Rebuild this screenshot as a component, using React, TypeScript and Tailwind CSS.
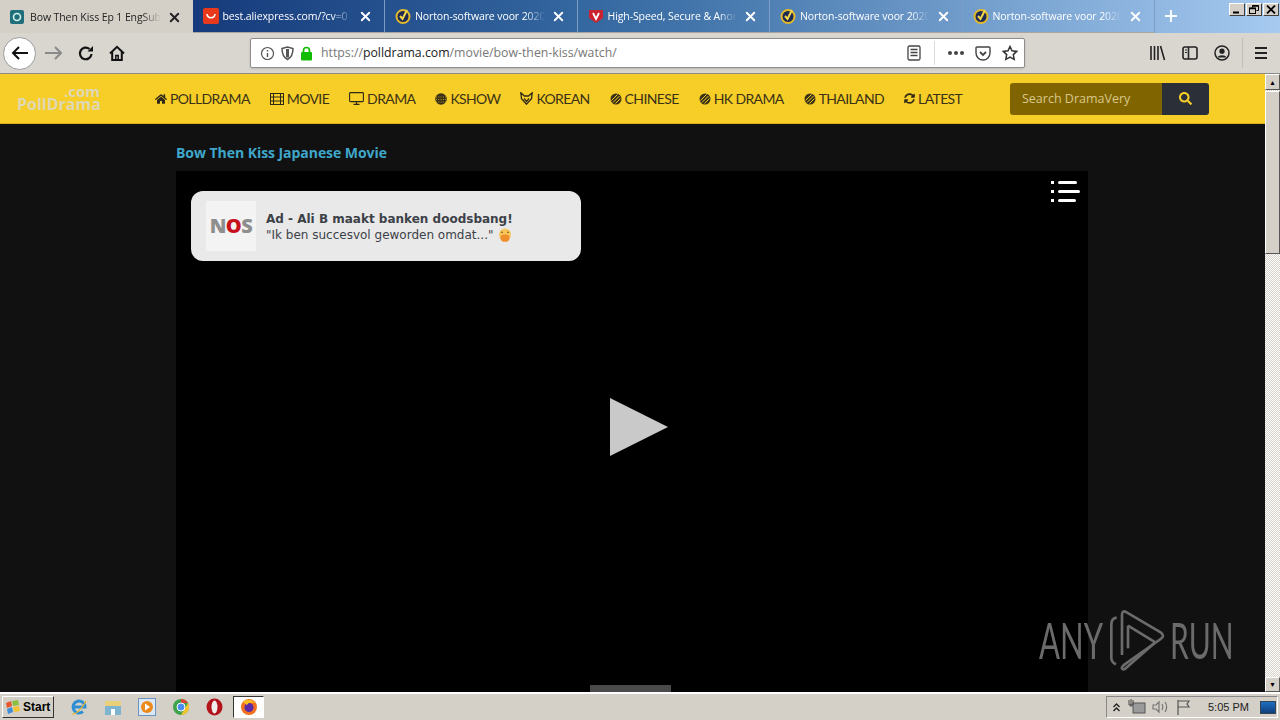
import { ReactNode } from "react";
import { FaHome, FaSearch, FaSyncAlt } from "react-icons/fa";
import { FiX, FiPlus } from "react-icons/fi";

const tabs = [
  { title: "Bow Then Kiss Ep 1 EngSub", icon: "poll", active: true },
  { title: "best.aliexpress.com/?cv=0", icon: "ali" },
  { title: "Norton-software voor 2020", icon: "norton" },
  { title: "High-Speed, Secure & Anonym", icon: "vpn" },
  { title: "Norton-software voor 2020", icon: "norton" },
  { title: "Norton-software voor 2020", icon: "norton" },
];

function TabIcon({ kind }: { kind: string }) {
  if (kind === "poll")
    return (
      <svg width="14" height="14" viewBox="0 0 14 14">
        <rect width="14" height="14" rx="2" fill="#1f6f7a" />
        <circle cx="7" cy="7" r="3.5" fill="none" stroke="#d9f0f0" strokeWidth="1.6" />
      </svg>
    );
  if (kind === "ali")
    return (
      <svg width="16" height="16" viewBox="0 0 16 16">
        <rect width="16" height="16" rx="2" fill="#e8391c" />
        <path d="M4 6c.5 5 7.5 5 8 0" fill="none" stroke="#fff" strokeWidth="1.6" />
      </svg>
    );
  if (kind === "vpn")
    return (
      <svg width="16" height="16" viewBox="0 0 16 16">
        <path d="M1 2h14v8l-7 5-7-5z" fill="#c9232f" />
        <path d="M5 5l3 6 3-6" fill="none" stroke="#fff" strokeWidth="1.8" />
      </svg>
    );
  return (
    <svg width="16" height="16" viewBox="0 0 16 16">
      <circle cx="8" cy="8.5" r="6.5" fill="#1d2a55" stroke="#e3b92c" strokeWidth="2" />
      <path d="M5 8l2.5 3L12 2" fill="none" stroke="#f5d94a" strokeWidth="2" />
    </svg>
  );
}

function NavItem({ icon, label }: { icon: ReactNode; label: string }) {
  return (
    <a className="flex items-center gap-[3px] font-['Lato',sans-serif] text-[14px] tracking-[-0.620px] text-[#3a3218]">
      <span className="flex items-center justify-center text-[#2f2a18]">{icon}</span>
      {label}
    </a>
  );
}

function Stripes() {
  return (
    <svg width="12" height="12" viewBox="0 0 12 12" className="shrink-0">
      <circle cx="6" cy="6" r="5.500" fill="#3a3218" />
      <path d="M1.500 7.500l6-6M3 9.500l6.500-6.500M5.500 10.500l5-5" stroke="#f7cd27" strokeWidth="1" />
    </svg>
  );
}

function Dotted() {
  return (
    <svg width="12" height="12" viewBox="0 0 12 12" className="shrink-0">
      <circle cx="6" cy="6" r="5.800" fill="#3a3218" />
      <path d="M1 4h10M1 6.500h10M1 9h10" stroke="#f7cd27" strokeWidth="0.700" strokeDasharray="1 1.300" />
    </svg>
  );
}

function ToolbarIcons() {
  return (
    <div className="ml-auto flex items-center">
      <svg width="17" height="16" viewBox="0 0 17 16" className="mr-[16px]" fill="none" stroke="#222" strokeWidth="1.6">
        <path d="M2 1v14M5.500 1v14M9 1v14M11.500 1l4 14" />
      </svg>
      <svg width="16" height="14" viewBox="0 0 16 14" className="mr-[16px]" fill="none" stroke="#222" strokeWidth="1.6">
        <rect x="1" y="1" width="14" height="12" rx="2" />
        <path d="M6.500 1v12" />
        <path d="M3 4h2M3 6.500h2" strokeWidth="1" />
      </svg>
      <svg width="16" height="16" viewBox="0 0 16 16" className="mr-[12px]">
        <circle cx="8" cy="8" r="7" fill="none" stroke="#222" strokeWidth="1.500" />
        <circle cx="8" cy="6.200" r="2.600" fill="#222" />
        <path d="M3.500 12.500c1-3 8-3 9 0" fill="#222" />
      </svg>
      <div className="mr-[11px] h-[30px] w-px bg-[#c2bfb8]" />
      <svg width="14" height="12" viewBox="0 0 14 12" className="mr-[12px]" stroke="#222" strokeWidth="2">
        <path d="M1 1h12M1 6h12M1 11h12" />
      </svg>
    </div>
  );
}

function UrlBar() {
  return (
    <div className="ml-[125px] flex h-[30px] w-[775px] items-center rounded-[2px] border border-[#8d8d8d] bg-white pl-[9px] shadow-sm">
      <svg width="15" height="15" viewBox="0 0 15 15" fill="none" stroke="#555" strokeWidth="1.200">
        <circle cx="7.500" cy="7.500" r="6" />
        <path d="M7.500 7v4M7.500 4v1.400" strokeWidth="1.400" />
      </svg>
      <svg width="13" height="15" viewBox="0 0 13 15" className="ml-[6px]" fill="none" stroke="#555" strokeWidth="1.500">
        <path d="M1 2.500l5.500-1.500 5.500 1.500c0 6-1.500 9-5.500 11-4-2-5.500-5-5.500-11z" />
        <path d="M6.500 3v8.500" strokeWidth="3" />
      </svg>
      <svg width="13" height="15" viewBox="0 0 13 15" className="ml-[6px]">
        <rect x="1" y="6" width="11" height="8.500" rx="1" fill="#12bc00" />
        <path d="M3.500 6.500V4.500a3 3 0 0 1 6 0v2" fill="none" stroke="#12bc00" strokeWidth="1.700" />
      </svg>
      <span className="ml-[8px] mt-[1px] font-['Open_Sans',sans-serif] text-[12.300px] text-[#777]">
        https://<span className="text-[#222]">polldrama.com</span>/movie/bow-then-kiss/watch/
      </span>
      <div className="ml-auto flex items-center">
        <svg width="14" height="16" viewBox="0 0 14 16" fill="none" stroke="#444" strokeWidth="1.300">
          <rect x="1" y="1" width="12" height="14" rx="1.500" />
          <path d="M3.500 4.500h7M3.500 7.500h7M3.500 10.500h7" />
        </svg>
        <div className="mx-[13px] h-[24px] w-px bg-[#dcdcdc]" />
        <span className="flex gap-[2px]">
          <i className="h-[4px] w-[4px] rounded-full bg-[#444]" />
          <i className="h-[4px] w-[4px] rounded-full bg-[#444]" />
          <i className="h-[4px] w-[4px] rounded-full bg-[#444]" />
        </span>
        <svg width="16" height="15" viewBox="0 0 16 15" className="ml-[11px]" fill="none" stroke="#444" strokeWidth="1.400">
          <path d="M2 1h12a1 1 0 0 1 1 1v5a7 7 0 0 1-14 0V2a1 1 0 0 1 1-1z" />
          <path d="M5 6l3 3 3-3" strokeWidth="1.800" />
        </svg>
        <svg width="16" height="16" viewBox="0 0 16 16" className="ml-[11px] mr-[6px]" fill="none" stroke="#333" strokeWidth="1.500">
          <path d="M8 1.500l2 4.300 4.700.6-3.400 3.200.9 4.700L8 12l-4.200 2.300.9-4.700L1.300 6.400 6 5.800z" />
        </svg>
      </div>
    </div>
  );
}

function WindowButton({ children }: { children: ReactNode }) {
  return (
    <span className="flex h-[13px] w-[16px] items-center justify-center border border-t-white border-l-white border-r-[#404040] border-b-[#404040] bg-[#d4d0c8]">
      <svg width="10" height="9" viewBox="0 0 10 9" fill="none" stroke="#000">
        {children}
      </svg>
    </span>
  );
}

function Browser() {
  return (
    <>
      <div className="flex h-[33px] shrink-0 bg-linear-to-r from-[#0a246a] via-[#3a6ea5] to-[#a6caf0]">
        {tabs.map((t, i) => (
          <div
            key={i}
            className={
              t.active
                ? "flex h-[33px] w-[192.500px] shrink-0 items-center bg-[#d4d0c8] pl-[10px] pr-[11px] text-[#222]"
                : "flex h-[33px] w-[192.500px] shrink-0 items-center border-r border-[#7f9cc4] border-b border-b-[#a9a69f] pl-[10px] pr-[11px] text-white"
            }
          >
            <span className="flex w-[20px] shrink-0"><TabIcon kind={t.icon} /></span>
            <span className="mt-[2px] flex-1 overflow-hidden whitespace-nowrap font-['Open_Sans',sans-serif] text-[10.500px] tracking-[-0.100px] [mask-image:linear-gradient(to_right,black_85%,transparent)]">
              {t.title}
            </span>
            <FiX size={15} strokeWidth={3} className="ml-[6px] mt-[1px] shrink-0" />
          </div>
        ))}
        <FiPlus size={18} strokeWidth={2.500} className="ml-[7px] mt-[7px] text-white" />
        <div className="ml-auto mr-[1px] mt-[3px] flex h-[13px] gap-[1px]">
          <WindowButton>
            <path d="M1 7.500h6" strokeWidth="2" />
          </WindowButton>
          <WindowButton>
            <path d="M3.500 2.500V.500h6v5H7.500" strokeWidth="1" />
            <rect x="0.500" y="3" width="6" height="5.500" strokeWidth="1" />
            <path d="M0.500 3.500h6M3.500 1h6" strokeWidth="1.500" />
          </WindowButton>
          <WindowButton>
            <path d="M1 .5l8 8M9 .5l-8 8" strokeWidth="1.800" />
          </WindowButton>
        </div>
      </div>
      <div className="flex h-[41px] shrink-0 items-center border-b border-[#8c8a85] bg-[#d9d6d0]">
        <div className="ml-[3px] flex h-[33px] w-[33px] items-center justify-center rounded-full border border-[#9a9a9a] bg-white">
          <svg width="18" height="16" viewBox="0 0 18 16" fill="none" stroke="#111" strokeWidth="2">
            <path d="M17 8H2M8 2L2 8l6 6" />
          </svg>
        </div>
        <svg width="17" height="14" viewBox="0 0 17 14" className="ml-[9px]" fill="none" stroke="#8a8a8a" strokeWidth="2">
          <path d="M0 7h15M10 1l6 6-6 6" />
        </svg>
        <svg width="16" height="16" viewBox="0 0 16 16" className="ml-[16px]" fill="none" stroke="#111" strokeWidth="2.200">
          <path d="M13.500 9a5.800 5.800 0 1 1-2-5" />
          <path d="M15 1v5.500H9.500z" fill="#111" stroke="none" />
        </svg>
        <svg width="16" height="16" viewBox="0 0 16 16" className="ml-[15px]" fill="none" stroke="#111" strokeWidth="2">
          <path d="M1 8.500L8 1.800l7 6.700" />
          <path d="M3.200 7v8h9.600V7" />
          <path d="M6.800 15v-4.500h2.400V15" strokeWidth="1.500" />
        </svg>
        <UrlBar />
        <ToolbarIcons />
      </div>
    </>
  );
}

function SiteHeader() {
  return (
    <header className="flex h-[50px] shrink-0 items-center border-b border-[#d9b21f] bg-[#f7cd27]">
      <div className="ml-[17px] flex w-[138px] flex-col font-['Open_Sans',sans-serif] font-bold leading-none text-[#dfd8b4]">
        <span className="w-[83px] text-right text-[15px] leading-[10px]">.com</span>
        <span className="text-[16px] leading-[16px]">PollDrama</span>
      </div>
      <nav className="flex gap-[20px]">
        <NavItem icon={<FaHome size={12} />} label="POLLDRAMA" />
        <NavItem
          icon={
            <svg width="14" height="12" viewBox="0 0 14 12" fill="none" stroke="#2f2a18" strokeWidth="1">
              <rect x="0.500" y="0.500" width="13" height="11" />
              <path d="M3.500 0v12M10.500 0v12M3.500 4h7M3.500 8h7M0 4h3M0 8h3M11 4h3M11 8h3" />
            </svg>
          }
          label="MOVIE"
        />
        <NavItem
          icon={
            <svg width="15" height="13" viewBox="0 0 15 13" fill="none" stroke="#2f2a18" strokeWidth="1.100">
              <rect x="0.600" y="0.600" width="13.800" height="9" rx="0.800" />
              <path d="M7.500 9.500v2.500M4.500 12.400h6" />
            </svg>
          }
          label="DRAMA"
        />
        <NavItem icon={<Dotted />} label="KSHOW" />
        <NavItem
          icon={
            <svg width="13" height="13" viewBox="0 0 13 13" fill="none" stroke="#2f2a18" strokeWidth="1.300">
              <path d="M.8.800l3.700 3.200h4L12.200.8l-.7 6-5 5.400-5-5.400z" />
              <path d="M4 6.500l2.500 3 2.500-3" />
            </svg>
          }
          label="KOREAN"
        />
        <NavItem icon={<Stripes />} label="CHINESE" />
        <NavItem icon={<Stripes />} label="HK DRAMA" />
        <NavItem icon={<Stripes />} label="THAILAND" />
        <NavItem icon={<FaSyncAlt size={11} />} label="LATEST" />
      </nav>
      <div className="ml-auto mr-[56px] flex h-[32px] w-[199px] overflow-hidden rounded-[3px]">
        <div className="flex w-[152px] items-center bg-[#806400] pl-[12px] pt-[2px] font-['Open_Sans',sans-serif] text-[12.500px] text-[#d8c88a]">
          Search DramaVery
        </div>
        <div className="flex flex-1 items-center justify-center bg-[#2b3038] text-[#f7cd27]">
          <FaSearch size={13} />
        </div>
      </div>
    </header>
  );
}

function Player() {
  return (
    <div className="relative ml-[176px] mt-[8px] w-[912px] flex-1 bg-black">
      <div className="absolute left-[15px] top-[20px] flex h-[70px] w-[390px] items-center rounded-[12px] bg-[#e9e9e9] pl-[15px]">
        <div className="flex h-[50px] w-[50px] items-center justify-center bg-[#f3f3f3] font-['Open_Sans',sans-serif] text-[20px] font-extrabold tracking-[-0.500px] text-[#8e8e8e]">
          N<span className="text-[#c8101c]">O</span>S
        </div>
        <div className="ml-[10px] mt-[2px] font-['DejaVu_Sans',sans-serif] text-[#3c4148]">
          <div className="text-[12px] font-bold leading-[16px]">Ad - Ali B maakt banken doodsbang!</div>
          <div className="flex items-center text-[12px] leading-[16px]">
            "Ik ben succesvol geworden omdat..."
            <svg width="14" height="14" viewBox="0 0 14 14" className="ml-[4px]">
              <circle cx="7" cy="6.500" r="6" fill="#f8c65a" />
              <path d="M3 4.500q1-1 2 0M9 4.500q1-1 2 0" fill="none" stroke="#7a4a10" strokeWidth="1" />
              <path d="M2.500 10c0-3 2-3.500 4.500-3.500s4.500.5 4.500 3.500-2 3.800-4.500 3.800-4.500-.8-4.500-3.800z" fill="#ef8f2c" />
            </svg>
          </div>
        </div>
      </div>
      <div className="absolute left-[875px] top-[10px] flex flex-col gap-[6px]">
        {[19, 22, 18].map((w, i) => (
          <div key={i} className="flex items-center gap-[4px]">
            <i className="h-[3px] w-[3px] bg-white" />
            <i className="h-[3px] rounded-full bg-white" style={{ width: w }} />
          </div>
        ))}
      </div>
      <svg width="60" height="60" viewBox="0 0 60 60" className="absolute left-[433px] top-[226px]">
        <path d="M1 1l58 29L1 59z" fill="#c9c9c9" />
      </svg>
      <div className="absolute bottom-0 left-[414px] h-[7px] w-[81px] bg-[#4a4a4a]" />
    </div>
  );
}

function Scrollbar() {
  return (
    <div className="flex w-[15px] shrink-0 flex-col bg-[repeating-conic-gradient(#ffffff_0_25%,#d4d0c8_0_50%)] bg-size-[2px_2px]">
      <div className="flex h-[16px] items-center justify-center border border-t-white border-l-white border-r-[#555] border-b-[#555] bg-[#d4d0c8] text-[7px] leading-none text-black">▲</div>
      <div className="mt-[1px] h-[163px] border border-t-white border-l-white border-r-[#555] border-b-[#555] bg-[#d4d0c8]" />
      <div className="mt-auto flex h-[15px] items-center justify-center border border-t-white border-l-white border-r-[#555] border-b-[#555] bg-[#d4d0c8] text-[7px] leading-none text-black">▼</div>
    </div>
  );
}

function Watermark() {
  return (
    <div className="absolute left-[1039px] top-[605px] flex h-[70px] items-center text-[#6b6b6b]">
      <span className="w-[61px] origin-left scale-x-[0.62] whitespace-nowrap font-['Lato',sans-serif] text-[50px] leading-none">ANY</span>
      <svg width="75" height="70" viewBox="0 0 225 210" fill="none" stroke="#6b6b6b" strokeWidth="8" strokeLinejoin="round">
        <path d="M50 38Q34 40 34 58V158Q34 172 48 178" />
        <path d="M66 150V30Q66 14 80 22L182 82Q196 92 182 102L74 178Q58 190 72 194" />
        <path d="M84 62L166 112L72 194" />
        <path d="M84 62V130" />
      </svg>
      <span className="-ml-[5px] w-[61px] origin-left scale-x-[0.6] whitespace-nowrap font-['Lato',sans-serif] text-[50px] leading-none">RUN</span>
    </div>
  );
}

function Taskbar() {
  return (
    <div className="flex h-[28px] shrink-0 items-center border-t-2 border-t-white bg-[#d4d0c8]">
      <div className="ml-[2px] flex h-[22px] w-[52px] items-center gap-[3px] border border-t-white border-l-white border-r-[#333] border-b-[#333] bg-[#d4d0c8] pl-[2px] font-['Liberation_Sans',sans-serif] text-[12px] font-bold text-black">
        <svg width="15" height="15" viewBox="0 0 15 15">
          <path d="M1 3l5-2 1 5-5 2z" fill="#e8562a" />
          <path d="M7 1l6-1 1 5-6 1z" fill="#8cbf3f" />
          <path d="M2 9l5-2 1 5-5 2z" fill="#3f8fd8" />
          <path d="M8 7l6-1 1 5-6 1z" fill="#f4c430" />
        </svg>
        Start
      </div>
      <div className="ml-[16px] flex items-center gap-[16px]">
        <svg width="18" height="18" viewBox="0 0 18 18" fill="none">
          <path d="M3 9h12a6 6 0 1 0-2 4.500" stroke="#2f8fd6" strokeWidth="3" />
          <path d="M2 16c3 1 10-5 14-13" stroke="#e3b92c" strokeWidth="1.200" />
        </svg>
        <svg width="18" height="18" viewBox="0 0 18 18">
          <rect x="1" y="3" width="16" height="13" rx="1" fill="#e8cf7a" />
          <rect x="1" y="8" width="16" height="9" fill="#7fb4cf" />
          <rect x="7" y="11" width="4" height="6" fill="#fff" />
        </svg>
        <svg width="18" height="18" viewBox="0 0 18 18">
          <rect x="0.500" y="0.500" width="17" height="17" fill="#dbe8f5" stroke="#6a93c0" />
          <circle cx="9" cy="9" r="6" fill="#ec8a1c" />
          <path d="M7 5.500l5 3.500-5 3.500z" fill="#fff" />
        </svg>
        <svg width="18" height="18" viewBox="0 0 18 18">
          <circle cx="9" cy="9" r="8" fill="#3fa34d" />
          <path d="M9 1a8 8 0 0 1 7 4H9z" fill="#dc4437" />
          <path d="M16 5a8 8 0 0 1-7 12l3.500-6z" fill="#f4c430" />
          <circle cx="9" cy="9" r="4" fill="#4a8ef0" stroke="#fff" />
        </svg>
        <svg width="17" height="18" viewBox="0 0 17 18">
          <ellipse cx="8.500" cy="9" rx="8" ry="8.500" fill="#b3131b" />
          <ellipse cx="8.500" cy="9" rx="3" ry="6.500" fill="#eee" />
        </svg>
        <div className="-ml-[6px] flex h-[22px] w-[31px] items-center justify-center border border-t-[#333] border-l-[#333] border-r-white border-b-white bg-white">
          <svg width="18" height="18" viewBox="0 0 18 18">
            <circle cx="9" cy="9" r="8" fill="#f2701f" />
            <circle cx="9" cy="9.500" r="4.500" fill="#5b2aa8" />
            <path d="M3 4c3-3 9-3 12 1-3-1-7-1-8 2z" fill="#fbbf24" />
          </svg>
        </div>
      </div>
      <div className="ml-auto mr-[2px] flex h-[22px] w-[172px] items-center border border-t-[#888] border-l-[#888] border-r-white border-b-white pl-[6px] font-['Liberation_Sans',sans-serif] text-[11px] text-[#222]">
        <svg width="7" height="9" viewBox="0 0 7 9" fill="none" stroke="#222" strokeWidth="1.400">
          <path d="M.5 4l3-3 3 3M.5 8l3-3 3 3" />
        </svg>
        <svg width="18" height="16" viewBox="0 0 18 16" className="ml-[8px]" fill="#9a9a9a">
          <rect x="5" y="4" width="12" height="10" stroke="#555" />
          <path d="M3 0v8M1 1v5h4V1" stroke="#444" fill="none" />
        </svg>
        <svg width="16" height="14" viewBox="0 0 16 14" className="ml-[6px]" fill="none" stroke="#777" strokeWidth="1.200">
          <path d="M1 5h3l3-3v10l-3-3H1zM10 4c1 2 1 4 0 6M13 2c2 3 2 7 0 10" />
        </svg>
        <svg width="16" height="16" viewBox="0 0 16 16" className="ml-[8px]" fill="none" stroke="#555" strokeWidth="1.200">
          <path d="M2 1v15M2 2h11l-2 3 2 3H2" />
        </svg>
        <span className="ml-[16px] mt-[1px]">5:05 PM</span>
        <div className="ml-auto mr-[1px] h-[13px] w-[16px] border border-[#345] bg-linear-to-b from-[#1d6fc4] to-[#0f3f7a]" />
      </div>
    </div>
  );
}

export default function App() {
  return (
    <div className="relative flex h-[720px] w-[1280px] flex-col overflow-hidden bg-[#111]">
      <Browser />
      <div className="flex min-h-0 flex-1">
        <main className="flex flex-1 flex-col bg-[#111]">
          <SiteHeader />
          <h1 className="ml-[176px] mt-[19px] font-['Open_Sans',sans-serif] text-[14px] font-bold leading-[20px] tracking-[-0.050px] text-[#3fa7cb]">
            Bow Then Kiss Japanese Movie
          </h1>
          <Player />
        </main>
        <Scrollbar />
      </div>
      <Taskbar />
      <Watermark />
    </div>
  );
}
